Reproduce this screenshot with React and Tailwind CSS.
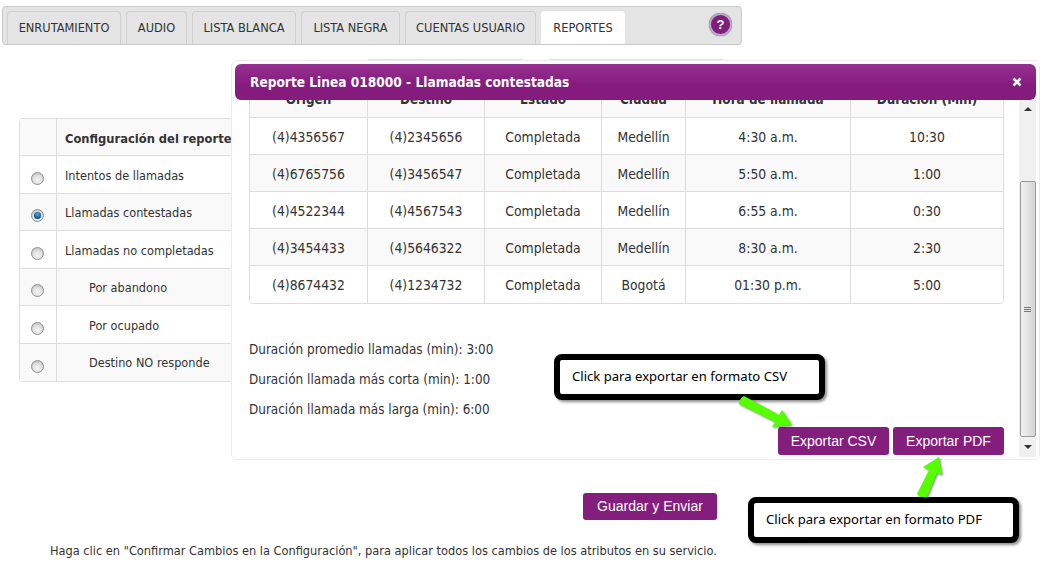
import React from "react";

const tabs = [
  { label: "ENRUTAMIENTO", w: "w-[114px]" },
  { label: "AUDIO", w: "w-[61px]" },
  { label: "LISTA BLANCA", w: "w-[104px]" },
  { label: "LISTA NEGRA", w: "w-[99px]" },
  { label: "CUENTAS USUARIO", w: "w-[131px]" },
];

const options = [
  { label: "Intentos de llamadas", h: "h-[38px] pt-0", pt: "pt-[3px]", bg: "bg-white" },
  { label: "Llamadas contestadas", h: "h-[37px]", pt: "pt-[2px]", bg: "bg-[#f9f9f9]", on: true },
  { label: "Llamadas no completadas", h: "h-[38px]", pt: "pt-[3px]", bg: "bg-white" },
  { label: "Por abandono", h: "h-[37px]", pt: "pt-[2px]", bg: "bg-[#f9f9f9]", sub: true },
  { label: "Por ocupado", h: "h-[38px]", pt: "pt-[3px]", bg: "bg-white", sub: true },
  { label: "Destino NO responde", h: "h-[37px]", pt: "pt-[2px]", bg: "bg-[#f9f9f9]", sub: true },
];

const rows = [
  ["(4)4356567", "(4)2345656", "Completada", "Medellín", "4:30 a.m.", "10:30"],
  ["(4)6765756", "(4)3456547", "Completada", "Medellín", "5:50 a.m.", "1:00"],
  ["(4)4522344", "(4)4567543", "Completada", "Medellín", "6:55 a.m.", "0:30"],
  ["(4)3454433", "(4)5646322", "Completada", "Medellín", "8:30 a.m.", "2:30"],
  ["(4)8674432", "(4)1234732", "Completada", "Bogotá", "01:30 p.m.", "5:00"],
];
const head = ["Origen", "Destino", "Estado", "Ciudad", "Hora de llamada", "Duración (Min)"];
const cols = "grid grid-cols-[118px_117px_117px_84px_165px_1fr]";

function Radio({ on }) {
  return (
    <span className="relative block w-[13px] h-[13px] rounded-full border border-[#8f8f8f] bg-[radial-gradient(circle_at_50%_65%,#f4f4f4_0%,#e2e2e2_45%,#b5b5b5_100%)]">
      {on && <span className="absolute left-[2px] top-[2px] w-[7px] h-[7px] rounded-full bg-[radial-gradient(circle_at_50%_35%,#5aa9d8_0%,#0d5d96_60%,#0a3d66_100%)]" />}
    </span>
  );
}

function Note({ text, className }) {
  return (
    <div className={`absolute w-[271px] h-[46px] border-[6px] border-black rounded-[8px] bg-white shadow-[2px_2px_3px_rgba(0,0,0,0.45)] flex items-center pl-[12px] text-[13.1px] text-black font-['Noto_Sans',sans-serif] ${className}`}>
      {text}
    </div>
  );
}

export default function App() {
  return (
    <div className="relative w-[1044px] h-[582px] overflow-hidden bg-white pt-[6px] text-[12.6px] text-[#333] font-['DejaVu_Sans_Condensed','DejaVu_Sans',sans-serif]">
      {/* tab bar */}
      <div className="relative ml-[2px] w-[740px] h-[39px] bg-[#e4e4e4] border border-[#c9c9c9] rounded-[4px] flex items-end pl-[4px] gap-[5px]">
        {tabs.map((t) => (
          <div key={t.label} className={`${t.w} h-[33px] flex items-center justify-center bg-[#e4e4e4] border border-b-0 border-[#cfcfcf] rounded-t-[4px] text-[12.7px] text-[#333]`}>
            {t.label}
          </div>
        ))}
        <div className="w-[84px] h-[33px] flex items-center justify-center bg-white rounded-t-[4px] text-[12.7px] text-[#333]">
          REPORTES
        </div>
        <div className="absolute left-[706px] top-[6px] w-[23px] h-[23px] rounded-full bg-[#7f1d7c] border-2 border-[#b9a9c4] shadow-[0_0_1px_#555] flex items-center justify-center text-white font-bold text-[13px] font-['Liberation_Sans',sans-serif]">
          ?
        </div>
      </div>

      {/* controls hidden behind the dialog */}
      <div className="flex ml-[368px] mt-[14px] gap-[26px] h-[1px]">
        <div className="w-[155px] border-t border-[#e2e2e2]" />
        <div className="w-[174px] border-t border-[#e2e2e2]" />
      </div>

      {/* left table */}
      <div className="ml-[19px] mt-[58px] w-[420px] border border-[#dddddd] rounded-[4px] overflow-hidden">
        <div className="flex h-[37px] bg-[#f9f9f9] border-b border-[#dddddd]">
          <div className="w-[37px] border-r border-[#dddddd]" />
          <div className="flex items-center pl-[8px] pt-[3px] font-bold text-[12.8px]">Configuración del reporte</div>
        </div>
        {options.map((o, i) => (
          <div key={o.label} className={`flex ${o.h} ${o.bg} ${i < options.length - 1 ? "border-b border-[#dddddd]" : ""}`}>
            <div className="w-[37px] border-r border-[#dddddd] flex items-end justify-center pb-[8px] pr-[1px]">
              <Radio on={o.on} />
            </div>
            <div className={`flex items-center ${o.pt} ${o.sub ? "pl-[32px]" : "pl-[8px]"}`}>{o.label}</div>
          </div>
        ))}
      </div>

      {/* save */}
      <div className="ml-[583px] mt-[111px] w-[134px] h-[27px] flex items-center justify-center rounded-[3px] bg-[#841e7c] text-white text-[14px] font-['Liberation_Sans',sans-serif]">
        Guardar y Enviar
      </div>
      <p className="ml-[50px] mt-[24px] leading-[14px] text-[12.66px]">
        Haga clic en "Confirmar Cambios en la Configuración", para aplicar todos los cambios de los atributos en su servicio.
      </p>

      {/* dialog */}
      <div className="absolute left-[231px] top-[60px] w-[809px] h-[400px] bg-white border border-[#ececec] rounded-[6px] pt-[3px] pl-[3px] pr-[3px]">
        <div className="relative z-10 w-[801px] h-[36px] rounded-[6px] bg-[linear-gradient(#95318f,#861b7e_60%)] flex items-center justify-between pl-[15px] pr-[14px] text-white font-bold text-[13.6px]">
          <span>Reporte Linea 018000 - Llamadas contestadas</span>
          <svg width="10" height="10" viewBox="0 0 10 10" className="mb-[1px]"><path d="M1.5 1.5 8.5 8.5M8.5 1.5 1.5 8.5" stroke="#fff" strokeWidth="2.6" /></svg>
        </div>
        <div className="flex">
          <div className="w-[784px] h-[357px] overflow-hidden pl-[14px] pr-[15px]">
            <div className="w-[755px] -mt-[20px] border border-[#dddddd] rounded-[4px] overflow-hidden text-[13.8px]">
              <div className={`${cols} h-[37px] bg-[#f9f9f9] border-b border-[#dddddd] font-bold text-[13.4px]`}>
                {head.map((h, i) => (
                  <div key={h} className={`flex items-center justify-center pt-[2px] ${i < 5 ? "border-r border-[#dddddd]" : ""}`}>{h}</div>
                ))}
              </div>
              {rows.map((r, ri) => (
                <div key={r[0]} className={`${cols} h-[37px] ${ri % 2 ? "bg-[#f9f9f9]" : "bg-white"} ${ri < 4 ? "border-b border-[#dddddd]" : ""}`}>
                  {r.map((c, i) => (
                    <div key={i} className={`flex items-center justify-center pt-[2px] ${i < 5 ? "border-r border-[#dddddd]" : ""}`}>{c}</div>
                  ))}
                </div>
              ))}
            </div>
            <div className="mt-[39px] flex flex-col gap-[16px] text-[13.4px] leading-[14px]">
              <p>Duración promedio llamadas (min): 3:00</p>
              <p>Duración llamada más corta (min): 1:00</p>
              <p>Duración llamada más larga (min): 6:00</p>
            </div>
            <div className="mt-[10px] flex justify-end gap-[4px]">
              <div className="w-[111px] h-[28px] flex items-center justify-center rounded-[3px] bg-[#841e7c] text-white text-[14px] font-['Liberation_Sans',sans-serif]">Exportar CSV</div>
              <div className="w-[111px] h-[28px] flex items-center justify-center rounded-[3px] bg-[#841e7c] text-white text-[14px] font-['Liberation_Sans',sans-serif]">Exportar PDF</div>
            </div>
          </div>
          {/* scrollbar */}
          <div className="w-[17px] h-[357px] bg-[#f0f0f0] flex flex-col items-center">
            <div className="h-[17px] flex items-center justify-center">
              <span className="w-0 h-0 border-x-[4px] border-x-transparent border-b-[4px] border-b-[#333]" />
            </div>
            <div className="mt-[64px] w-[16px] h-[256px] border border-[#9a9a9a] rounded-[2px] bg-[linear-gradient(90deg,#f2f2f2,#d4d4d4)] flex flex-col items-center justify-center gap-[1px]">
              <span className="w-[7px] h-[1px] bg-[#777]" />
              <span className="w-[7px] h-[1px] bg-[#777]" />
              <span className="w-[7px] h-[1px] bg-[#777]" />
            </div>
            <div className="h-[20px] flex items-center justify-center">
              <span className="w-0 h-0 border-x-[4px] border-x-transparent border-t-[4px] border-t-[#333]" />
            </div>
          </div>
        </div>
      </div>

      {/* annotations */}
      <Note text="Click para exportar en formato CSV" className="left-[554px] top-[354px]" />
      <Note text="Click para exportar en formato PDF" className="left-[748px] top-[497px]" />
      <svg className="absolute left-[730px] top-[390px] drop-shadow-[1px_1px_1px_rgba(0,0,0,0.5)]" width="70" height="40" viewBox="0 0 70 40">
        <path d="M14 6Q10 7 9 14L45 32 42 37 62 35 52 20 49 25Z" fill="#55ff00" />
      </svg>
      <svg className="absolute left-[910px] top-[450px] drop-shadow-[1px_1px_1px_rgba(0,0,0,0.5)]" width="40" height="50" viewBox="0 0 40 50">
        <path d="M29 7 13 17 19 20 7 44Q11 48 17 47L27 23 32 25Z" fill="#55ff00" />
      </svg>
    </div>
  );
}
